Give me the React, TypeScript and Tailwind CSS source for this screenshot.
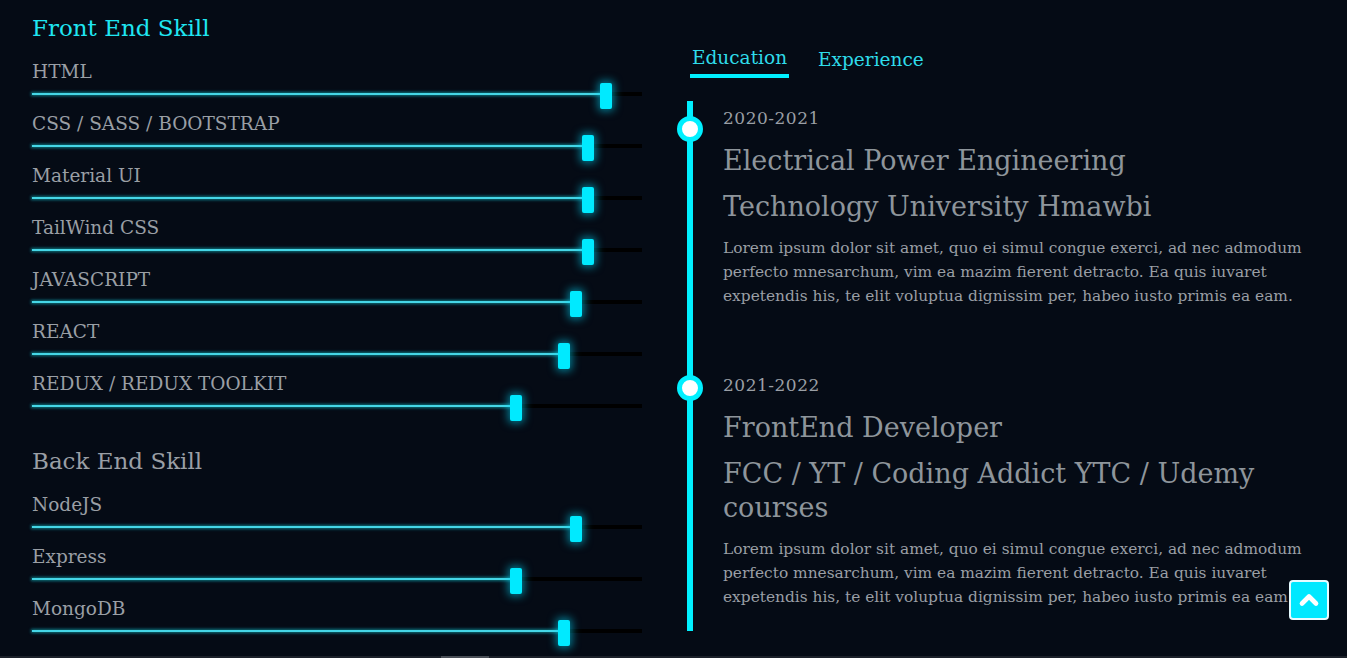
import { ChevronUp } from "lucide-react";

const frontEnd = [
  { name: "HTML", value: 95 },
  { name: "CSS / SASS / BOOTSTRAP", value: 92 },
  { name: "Material UI", value: 92 },
  { name: "TailWind CSS", value: 92 },
  { name: "JAVASCRIPT", value: 90 },
  { name: "REACT", value: 88 },
  { name: "REDUX / REDUX TOOLKIT", value: 80 },
];

const backEnd = [
  { name: "NodeJS", value: 90 },
  { name: "Express", value: 80 },
  { name: "MongoDB", value: 88 },
];

const lorem =
  "Lorem ipsum dolor sit amet, quo ei simul congue exerci, ad nec admodum perfecto mnesarchum, vim ea mazim fierent detracto. Ea quis iuvaret expetendis his, te elit voluptua dignissim per, habeo iusto primis ea eam.";

const education = [
  { date: "2020-2021", title: "Electrical Power Engineering", place: "Technology University Hmawbi", dot: "top-[10px]" },
  { date: "2021-2022", title: "FrontEnd Developer", place: "FCC / YT / Coding Addict YTC / Udemy courses", dot: "top-[2px]" },
];

function SkillRow({ name, value }: { name: string; value: number }) {
  // thumb is 12px wide, track is 610px
  const left = Math.round((value / 100) * (610 - 12));
  return (
    <div>
      <div className="h-[28px] text-[18.5px] leading-[29px] text-[#9a9fa5]">{name}</div>
      <div className="relative h-[24px]">
        <div className="absolute left-0 right-0 top-[7px] h-[4px] bg-black" />
        <div
          className="absolute left-0 top-[8px] h-[2px] bg-[#45d6e6] shadow-[0_0_3px_1px_rgba(20,170,190,0.7)]"
          style={{ width: left + 6 }}
        />
        <div
          className="absolute top-[-2px] h-[26px] w-[12px] rounded-[2px] bg-[#00eaff] shadow-[0_0_8px_2px_rgba(0,220,255,0.55)]"
          style={{ left }}
        />
      </div>
    </div>
  );
}

function Entry({ date, title, place, dot }: { date: string; title: string; place: string; dot: string }) {
  return (
    <div className="relative">
      <div className={`absolute left-[-46px] ${dot} h-[26px] w-[26px] rounded-full border-[5px] border-[#00f0ff] bg-white`} />
      <div className="h-[24px] text-[17px] leading-[24px] tracking-[0.5px] text-[#9a9fa5]">{date}</div>
      <h3 className="mt-[14px] text-[27px] leading-[34px] text-[#8e959b]">{title}</h3>
      <h4 className="mt-[12px] text-[27px] leading-[34px] text-[#8e959b]">{place}</h4>
      <p className="mt-[12px] text-[15.4px] leading-[24px] text-[#9a9fa5]">{lorem}</p>
    </div>
  );
}

export default function App() {
  return (
    <div className="relative flex h-[658px] w-full flex-col overflow-hidden bg-[#050b15] font-['DejaVu_Serif',serif]">
      <div className="flex flex-1 pl-[32px] pt-[12px]">
        {/* Skills */}
        <div className="w-[610px] shrink-0">
          <h2 className="mb-[13px] text-[23px] leading-[32px] text-[#1fe6f2]">Front End Skill</h2>
          {frontEnd.map((s) => (
            <SkillRow key={s.name} {...s} />
          ))}
          <h2 className="mb-[13px] mt-[24px] text-[23px] leading-[32px] text-[#9a9fa5]">Back End Skill</h2>
          {backEnd.map((s) => (
            <SkillRow key={s.name} {...s} />
          ))}
        </div>

        {/* Education / Experience */}
        <div className="ml-[45px] flex-1 pr-[24px]">
          <div className="ml-[3px] mt-[32px] flex gap-[27px]">
            <button className="border-b-4 border-[#00f0ff] px-[2px] pb-[2px] text-[18.5px] leading-[28px] text-[#2fdcea]">Education</button>
            <button className="px-[2px] pb-[2px] text-[18.5px] leading-[28px] text-[#2fdcea]">Experience</button>
          </div>
          <div className="mt-[23px] flex flex-col gap-[65px] border-l-[6px] border-[#00f0ff] pb-[22px] pl-[30px] pt-[5px]">
            {education.map((e) => (
              <Entry key={e.date} {...e} />
            ))}
          </div>
        </div>
      </div>

      <div className="flex h-[2px] w-full bg-[#1c212a]">
        <div className="ml-[441px] h-full w-[48px] bg-[#4a4f57]" />
      </div>

      <button className="absolute left-[1289px] top-[580px] flex h-[40px] w-[40px] items-center justify-center rounded-[4px] border-2 border-[#e6fbff] bg-[#00e8ff]">
        <ChevronUp className="h-[28px] w-[28px] text-white" strokeWidth={4} />
      </button>
    </div>
  );
}
